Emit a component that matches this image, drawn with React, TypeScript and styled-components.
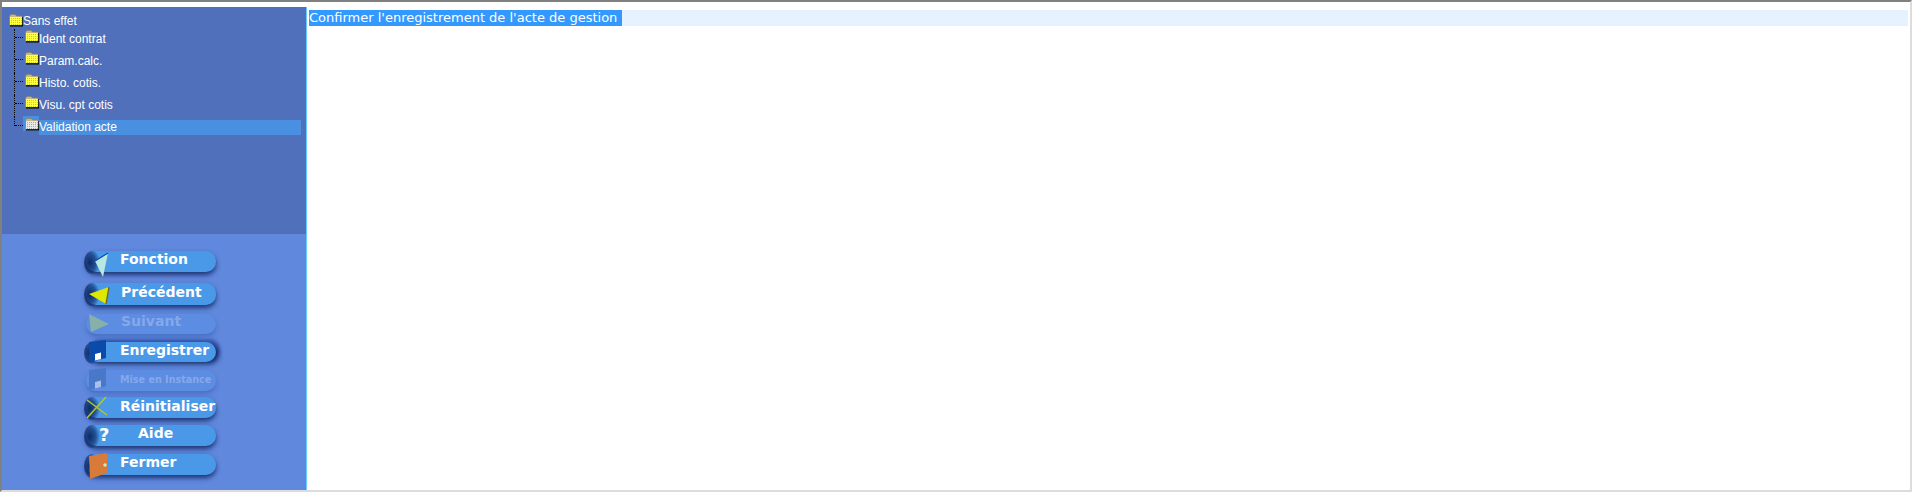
import React from 'react';
import styled, { createGlobalStyle } from 'styled-components';

const GlobalStyle = createGlobalStyle`
    html, body {
        margin: 0;
        padding: 0;
        background: #ffffff;
    }
`;

const Frame = styled.div`
    width: 1912px;
    height: 492px;
    display: flex;
    box-sizing: border-box;
    border-top: 2px solid #808080;
    border-left: 2px solid #808080;
    border-right: 2px solid #dcdcdc;
    border-bottom: 2px solid #dcdcdc;
    background: #ffffff;
    overflow: hidden;
`;

const Sidebar = styled.div`
    width: 305px;
    margin-top: 5px;
    flex-shrink: 0;
    display: flex;
    flex-direction: column;
    box-sizing: border-box;
    border-right: 1px solid #66ccff;
`;

const TreePanel = styled.div`
    height: 227px;
    box-sizing: border-box;
    padding: 6px 5px 0 5px;
    background: #5070bb;
    font-family: "Liberation Sans", Arial, sans-serif;
    font-size: 12px;
    color: #ffffff;
`;

const RootRow = styled.div`
    height: 16px;
    display: flex;
`;

const TreeChildren = styled.div`
    margin-left: 7px;
`;

const TreeRow = styled.div`
    height: 22px;
    display: flex;
`;

const Connector = styled.span<{ $last?: boolean }>`
    width: 9px;
    height: ${(p) => (p.$last ? '9px' : '22px')};
    flex-shrink: 0;
    box-sizing: border-box;
    border-left: 1px dotted #000000;

    &::before {
        content: '';
        display: block;
        margin-top: 8px;
        border-top: 1px dotted #000000;
    }
`;

const FolderSlot = styled.span<{ $selected?: boolean }>`
    width: 16px;
    height: 15px;
    margin-top: -1px;
    padding: 2px 0 0 2px;
    box-sizing: border-box;
    flex-shrink: 0;
    background: ${(p) => (p.$selected ? '#4a90e0' : 'transparent')};
`;

const TreeLabel = styled.span<{ $selected?: boolean }>`
    height: 15px;
    margin-top: 3px;
    line-height: 15px;
    flex: ${(p) => (p.$selected ? 1 : '0 0 auto')};
    background: ${(p) => (p.$selected ? '#4a90e0' : 'transparent')};
`;

const RootLabel = styled.span`
    line-height: 17px;
`;

const ButtonPanel = styled.div`
    flex: 1;
    display: flex;
    flex-direction: column;
    align-items: flex-start;
    padding: 17px 0 0 84px;
    background: #6088dd;
`;

const ActionButton = styled.div<{ $top: number; $height: number; $small?: boolean; $disabled?: boolean; $framed?: boolean }>`
    position: relative;
    width: 130px;
    height: ${(p) => p.$height}px;
    margin-top: ${(p) => p.$top}px;
    flex-shrink: 0;
    border-radius: 10px;
    background: ${(p) => (p.$disabled ? '#5c8de2' : '#4a98e8')};
    box-shadow: ${(p) =>
        p.$disabled
            ? '0 3px 4px rgba(50, 90, 170, 0.5)'
            : p.$framed
              ? '3px 2px 5px rgba(5, 25, 80, 0.85), 4px -3px 3px rgba(50, 80, 170, 0.7)'
              : '0 3px 5px rgba(5, 25, 80, 0.75)'};
    font-family: "DejaVu Sans", Verdana, sans-serif;
    font-weight: bold;
    font-size: ${(p) => (p.$small ? '9.6px' : '14px')};
    color: ${(p) => (p.$disabled ? '#86a8ea' : '#ffffff')};
`;

const ButtonLabel = styled.span<{ $left: number; $line: number }>`
    display: block;
    padding-left: ${(p) => p.$left}px;
    line-height: ${(p) => p.$line}px;
    white-space: nowrap;
`;

const ButtonIcon = styled.svg`
    position: absolute;
    left: 0;
    top: 0;
    overflow: visible;
`;

const Content = styled.div`
    flex: 1;
    padding: 8px 2px 0 2px;
`;

const MessageBar = styled.div`
    height: 16px;
    background: #e6f2ff;
    font-family: "DejaVu Sans", Verdana, sans-serif;
    font-size: 13px;
    line-height: 16px;
    display: flex;
`;

const Message = styled.span`
    display: block;
    width: 313px;
    box-sizing: border-box;
    background: #3399ff;
    color: #ffffff;
    white-space: nowrap;
    overflow: hidden;
`;

const Folder = ({ selected }: { selected?: boolean }) => (
    <svg width="14" height="13" viewBox="0 0 14 13" style={{ display: 'block' }}>
        <defs>
            <pattern id={selected ? 'dotGrey' : 'dotYellow'} width="2" height="2" patternUnits="userSpaceOnUse">
                <rect width="2" height="2" fill={selected ? '#e8e8e8' : '#ffff40'} />
                <rect width="1" height="1" fill={selected ? '#a8a8a8' : '#d8c830'} />
            </pattern>
        </defs>
        <path d="M1 12.5 H14 V3 H1 Z" fill="#000000" />
        <path d="M0.5 11 V2 L2 0.5 H6 L7.5 2 H13 V11 Z" fill="#c8b880" stroke="#8a8068" strokeWidth="0.6" />
        <rect x="1" y="3" width="12" height="8" fill={`url(#${selected ? 'dotGrey' : 'dotYellow'})`} />
    </svg>
);

const Shade = ({ id, height }: { id: string; height: number }) => (
    <>
        <defs>
            <radialGradient id={id} cx="0.35" cy="0.5" r="0.65">
                <stop offset="0" stopColor="#0a2460" stopOpacity="0.95" />
                <stop offset="0.6" stopColor="#0a2460" stopOpacity="0.6" />
                <stop offset="1" stopColor="#0a2460" stopOpacity="0" />
            </radialGradient>
        </defs>
        <ellipse cx="6" cy={height / 2 + 1} rx="8" ry={height / 2 + 1} fill={`url(#${id})`} />
    </>
);

const IconFonction = () => (
    <ButtonIcon width="30" height="21">
        <Shade id="shadeFonction" height={21} />
        <path d="M22 2 L9 10 L17 26 Z" fill="#b8e8e0" />
        <path d="M22 2 L9 10" stroke="#1040c0" strokeWidth="1.2" />
    </ButtonIcon>
);

const IconPrecedent = () => (
    <ButtonIcon width="30" height="21">
        <Shade id="shadePrecedent" height={21} />
        <path d="M23 4 L3 11 L20 21 Z" fill="#dde800" />
        <path d="M23 4 L20 21" stroke="#6a6a20" strokeWidth="1.4" />
    </ButtonIcon>
);

const IconSuivant = () => (
    <ButtonIcon width="30" height="20">
        <path d="M3 0 L23 10 L5 18 Z" fill="#86b0a8" />
    </ButtonIcon>
);

const IconSave = ({ muted }: { muted?: boolean }) => (
    <ButtonIcon width="30" height="21">
        {!muted && <Shade id="shadeSave" height={20} />}
        <path d="M3 0 L20 -2 V16 L3 20 Z" fill={muted ? '#4a78c8' : '#0a4aa8'} />
        <path d="M9 12 L15 10.5 V17 L9 18.5 Z" fill={muted ? '#a8beee' : '#ffffff'} />
    </ButtonIcon>
);

const IconReset = () => (
    <ButtonIcon width="30" height="21">
        <Shade id="shadeReset" height={21} />
        <path d="M1 3 L21 18 M20 0 L1 21" stroke="#b8c820" strokeWidth="1.5" />
    </ButtonIcon>
);

const IconHelp = () => (
    <ButtonIcon width="30" height="21">
        <Shade id="shadeHelp" height={21} />
        <text x="13" y="16" fontFamily='"DejaVu Sans", sans-serif' fontWeight="bold" fontSize="18" fill="#ffffff">
            ?
        </text>
    </ButtonIcon>
);

const IconDoor = () => (
    <ButtonIcon width="30" height="21">
        <Shade id="shadeDoor" height={22} />
        <path d="M3 2 L21 -1 V19 L4 25 Z" fill="#d87a3a" />
        <circle cx="19" cy="11" r="1.8" fill="#c8e8c0" />
    </ButtonIcon>
);

const children = ['Ident contrat', 'Param.calc.', 'Histo. cotis.', 'Visu. cpt cotis', 'Validation acte'];

const App = () => {
    return (
        <>
            <GlobalStyle />
            <Frame>
                <Sidebar>
                    <TreePanel>
                        <RootRow>
                            <FolderSlot>
                                <Folder />
                            </FolderSlot>
                            <RootLabel>Sans effet</RootLabel>
                        </RootRow>
                        <TreeChildren>
                            {children.map((label, i) => {
                                const last = i === children.length - 1;
                                return (
                                    <TreeRow key={label}>
                                        <Connector $last={last} />
                                        <FolderSlot $selected={last}>
                                            <Folder selected={last} />
                                        </FolderSlot>
                                        <TreeLabel $selected={last}>{label}</TreeLabel>
                                    </TreeRow>
                                );
                            })}
                        </TreeChildren>
                    </TreePanel>
                    <ButtonPanel>
                        <ActionButton $top={0} $height={21}>
                            <IconFonction />
                            <ButtonLabel $left={34} $line={16}>Fonction</ButtonLabel>
                        </ActionButton>
                        <ActionButton $top={11} $height={22}>
                            <IconPrecedent />
                            <ButtonLabel $left={35} $line={19}>Précédent</ButtonLabel>
                        </ActionButton>
                        <ActionButton $top={9} $height={20} $disabled>
                            <IconSuivant />
                            <ButtonLabel $left={35} $line={14}>Suivant</ButtonLabel>
                        </ActionButton>
                        <ActionButton $top={8} $height={20} $framed>
                            <IconSave />
                            <ButtonLabel $left={34} $line={16}>Enregistrer</ButtonLabel>
                        </ActionButton>
                        <ActionButton $top={8} $height={21} $disabled $small>
                            <IconSave muted />
                            <ButtonLabel $left={34} $line={19}>Mise en Instance</ButtonLabel>
                        </ActionButton>
                        <ActionButton $top={6} $height={21}>
                            <IconReset />
                            <ButtonLabel $left={34} $line={18}>Réinitialiser</ButtonLabel>
                        </ActionButton>
                        <ActionButton $top={7} $height={21}>
                            <IconHelp />
                            <ButtonLabel $left={52} $line={17}>Aide</ButtonLabel>
                        </ActionButton>
                        <ActionButton $top={8} $height={21}>
                            <IconDoor />
                            <ButtonLabel $left={34} $line={17}>Fermer</ButtonLabel>
                        </ActionButton>
                    </ButtonPanel>
                </Sidebar>
                <Content>
                    <MessageBar>
                        <Message>Confirmer l'enregistrement de l'acte de gestion</Message>
                    </MessageBar>
                </Content>
            </Frame>
        </>
    );
};

export default App;
